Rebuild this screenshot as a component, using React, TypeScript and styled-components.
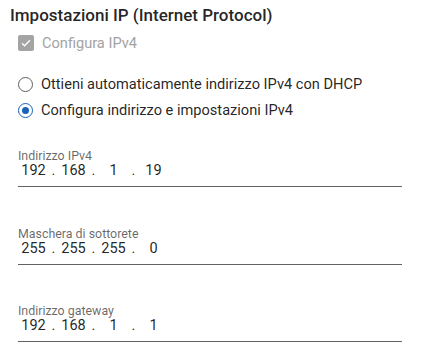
import React from "react";
import styled, { createGlobalStyle } from "styled-components";

const GlobalStyle = createGlobalStyle`
  html, body {
    margin: 0;
    padding: 0;
    background: #fff;
  }
  body {
    font-family: Roboto, "Noto Sans", "Liberation Sans", sans-serif;
    color: rgba(0, 0, 0, 0.87);
  }
`;

const Page = styled.div`
  width: 431px;
  height: 356px;
  padding-top: 3px;
  box-sizing: border-box;
  overflow: hidden;
`;

const Title = styled.h1`
  margin: 0 0 4px 10px;
  font-size: 17px;
  line-height: 24px;
  font-weight: 500;
  color: rgba(0, 0, 0, 0.87);
`;

const Body = styled.div`
  padding-left: 18px;
  width: 384px;
  display: flex;
  flex-direction: column;
`;

const OptionRow = styled.label<{ $height: number; $disabled?: boolean }>`
  height: ${(p) => p.$height}px;
  display: flex;
  align-items: center;
  gap: 8px;
  font-size: 14.6px;
  color: ${(p) => (p.$disabled ? "#a3a3a3" : "rgba(0, 0, 0, 0.87)")};
`;

const CheckBox = styled.span`
  width: 16px;
  height: 16px;
  border-radius: 2px;
  background: #a4a4a4;
  display: flex;
  align-items: center;
  justify-content: center;
`;

const RadioGroup = styled.div`
  margin-top: 16px;
  display: flex;
  flex-direction: column;
`;

const RadioCircle = styled.span<{ $checked?: boolean }>`
  width: 15px;
  height: 15px;
  box-sizing: border-box;
  border-radius: 50%;
  border: 1.6px solid ${(p) => (p.$checked ? "#1a62b8" : "#5f5f5f")};
  display: flex;
  align-items: center;
  justify-content: center;
  flex-shrink: 0;

  &::after {
    content: "";
    display: ${(p) => (p.$checked ? "block" : "none")};
    width: 7px;
    height: 7px;
    border-radius: 50%;
    background: #1a62b8;
  }
`;

const Fields = styled.div`
  margin-top: 26px;
  display: flex;
  flex-direction: column;
  gap: 39.5px;
`;

const Field = styled.div`
  display: flex;
  flex-direction: column;
  border-bottom: 1px solid #626262;
  padding-bottom: 6px;
`;

const FieldLabel = styled.div`
  font-size: 12.4px;
  line-height: 13px;
  color: rgba(0, 0, 0, 0.6);
`;

const IpValue = styled.div`
  display: flex;
  font-size: 14.5px;
  line-height: 18px;
  color: rgba(0, 0, 0, 0.87);
`;

const Octet = styled.span`
  width: 31px;
  text-align: center;
`;

const Dot = styled.span`
  width: 9px;
  text-align: center;
`;

function IpField(props: { label: string; value: string }) {
  const parts = props.value.split(".");
  return (
    <Field>
      <FieldLabel>{props.label}</FieldLabel>
      <IpValue>
        {parts.map((part, index) => (
          <React.Fragment key={`octet-${index}`}>
            {index > 0 && <Dot>.</Dot>}
            <Octet>{part}</Octet>
          </React.Fragment>
        ))}
      </IpValue>
    </Field>
  );
}

export default function App() {
  return (
    <>
      <GlobalStyle />
      <Page>
        <Title>Impostazioni IP (Internet Protocol)</Title>
        <Body>
          <OptionRow $height={24} $disabled>
            <CheckBox>
              <svg width="12" height="12" viewBox="0 0 24 24">
                <path d="M4 12.5l5 5L20 6.5" fill="none" stroke="#fff" strokeWidth="2.6" />
              </svg>
            </CheckBox>
            Configura IPv4
          </OptionRow>
          <RadioGroup>
            <OptionRow $height={26}>
              <RadioCircle />
              Ottieni automaticamente indirizzo IPv4 con DHCP
            </OptionRow>
            <OptionRow $height={26}>
              <RadioCircle $checked />
              Configura indirizzo e impostazioni IPv4
            </OptionRow>
          </RadioGroup>
          <Fields>
            <IpField label="Indirizzo IPv4" value="192.168.1.19" />
            <IpField label="Maschera di sottorete" value="255.255.255.0" />
            <IpField label="Indirizzo gateway" value="192.168.1.1" />
          </Fields>
        </Body>
      </Page>
    </>
  );
}
